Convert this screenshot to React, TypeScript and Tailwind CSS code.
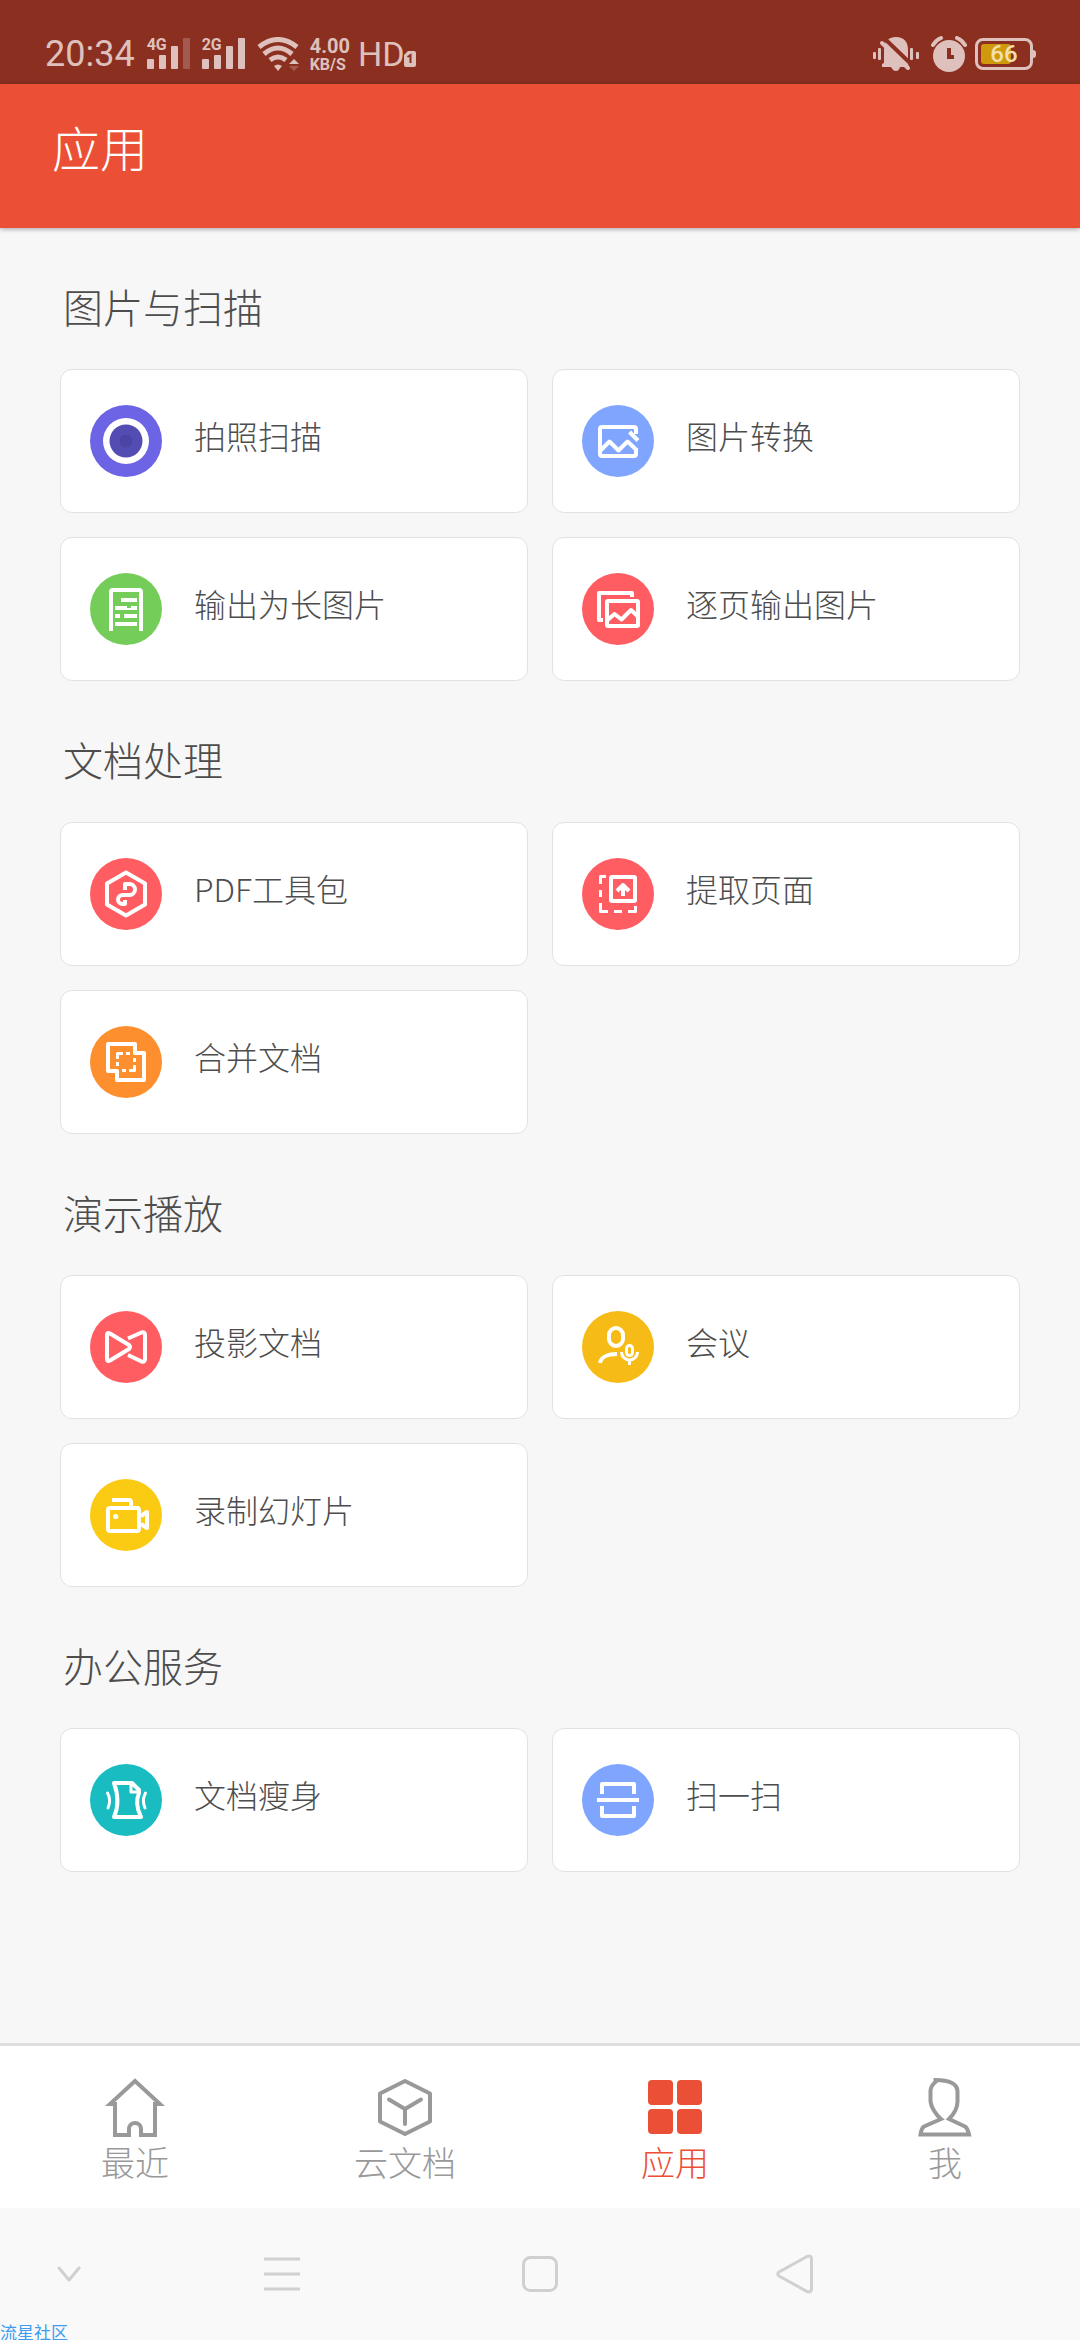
import { useState } from "react";
import type { ReactNode } from "react";

interface Tool {
  name: string;
  color: string;
  icon: ReactNode;
}

interface Section {
  title: string;
  tools: Tool[];
}

const sections: Section[] = [
  {
    title: "图片与扫描",
    tools: [
      {
        name: "拍照扫描",
        color: "bg-[#6c63e5]",
        icon: (
          <g stroke="none">
            <circle cx="36" cy="36" r="23" fill="white" />
            <circle cx="36" cy="36" r="16.5" fill="#534db3" />
            <circle cx="36" cy="36" r="6.3" fill="#4a44a5" />
          </g>
        ),
      },
      {
        name: "图片转换",
        color: "bg-[#7fa5ff]",
        icon: (
          <>
            <path d="M54 29V24Q54 22 52 22H20Q18 22 18 24V49Q18 51 20 51H52Q54 51 54 49V44" />
            <path d="M18 46L27.5 36.5L36.5 45.5L45.5 36.5L55 45.5" />
            <path d="M47.5 27L56 35.5" />
          </>
        ),
      },
      {
        name: "输出为长图片",
        color: "bg-[#74cd58]",
        icon: (
          <>
            <path d="M21 58V19Q21 17 23 17H49Q51 17 51 19V58" />
            <path d="M31 27H47M25 35H37M41 35H47M25 43H30M34 43H47M25 51H47" />
            <path strokeWidth="2" d="M37 36H41" />
          </>
        ),
      },
      {
        name: "逐页输出图片",
        color: "bg-[#ff5d62]",
        icon: (
          <>
            <path d="M50 24V20H17V47H21" />
            <rect x="25" y="28" width="31" height="25" rx="1" />
            <path d="M25 47.5L32.5 41L39.5 46.5L49 37L56 43.5" />
          </>
        ),
      },
    ],
  },
  {
    title: "文档处理",
    tools: [
      {
        name: "PDF工具包",
        color: "bg-[#ff5d62]",
        icon: (
          <>
            <path d="M36 14.5L55 25.5V46.5L36 57.5L17 46.5V25.5Z" />
            <path d="M35 32V26H39.5a5.5 5.5 0 0 1 0 11H32.5a4.5 4.5 0 0 0 0 9H35V42" />
          </>
        ),
      },
      {
        name: "提取页面",
        color: "bg-[#ff5d62]",
        icon: (
          <>
            <rect x="29" y="19" width="24" height="24" rx="1" />
            <path d="M41 38V27M35 33L41 27L47 33" />
            <path
              strokeWidth="3"
              d="M24 18.5H18.5V26M18.5 32V39M18.5 45V53.5H26M32 53.5H40M46 53.5H53.5V48"
            />
          </>
        ),
      },
      {
        name: "合并文档",
        color: "bg-[#fd8f2e]",
        icon: (
          <>
            <path d="M18 18H45V27H54V54H27V45H18Z" />
            <path
              strokeWidth="3"
              d="M27.5 33V27.5H33M36 27.5h4M44.5 32v4M44.5 39V44.5H39M36 44.5h-4M27.5 40v-4"
            />
          </>
        ),
      },
    ],
  },
  {
    title: "演示播放",
    tools: [
      {
        name: "投影文档",
        color: "bg-[#ff5d62]",
        icon: (
          <>
            <path d="M17 24Q17 21 20 22.5L39 34Q41 36 39 38L20 49.5Q17 51 17 48Z" />
            <path d="M38 27.5L51.5 21.5Q55 20.5 55 24V48Q55 51.5 51.5 50.5L38 44" />
          </>
        ),
      },
      {
        name: "会议",
        color: "bg-[#f6bb16]",
        icon: (
          <>
            <rect x="27" y="17" width="14" height="18" rx="7" />
            <path d="M18 52C19 46 26 43 35 43" />
            <rect x="44.5" y="34.5" width="6" height="10" rx="3" strokeWidth="3" />
            <path strokeWidth="3" d="M39.5 41A8 8 0 0 0 55.5 41M47.5 49V54" />
          </>
        ),
      },
      {
        name: "录制幻灯片",
        color: "bg-[#fbcb14]",
        icon: (
          <>
            <rect x="18" y="29" width="31" height="23" rx="2" />
            <path d="M22 21H39Q41 21 41 23V28" />
            <path d="M51 37L57 33V49L51 45" />
            <circle cx="25.7" cy="37.5" r="2.6" fill="white" stroke="none" />
          </>
        ),
      },
    ],
  },
  {
    title: "办公服务",
    tools: [
      {
        name: "文档瘦身",
        color: "bg-[#18bcc1]",
        icon: (
          <>
            <path d="M42 19H24C28 30 29 42 24 53H51C46 43 46 36 49 29V26Z" />
            <path strokeWidth="3" d="M41 20V28H49" />
            <path strokeLinecap="round" strokeWidth="3" d="M17.5 29Q21.5 36 18 44M55.5 29Q51.5 36 55 44" />
          </>
        ),
      },
      {
        name: "扫一扫",
        color: "bg-[#7fa5ff]",
        icon: <path d="M20 30V20H52V30M20 42V52H52V42M15 36H57" />,
      },
    ],
  },
];

const tabs = [
  {
    name: "最近",
    icon: <path d="M30 3L5 26H10V57H24V51a6 6 0 0 1 12 0V57H50V26H55Z" />,
  },
  {
    name: "云文档",
    icon: (
      <g strokeLinecap="round" strokeLinejoin="round">
        <path d="M30 3L55 15.5V43.5L30 56L5 43.5V15.5Z" />
        <path d="M14 21.5L30 31L46 21.5M30 31V46" />
      </g>
    ),
  },
  {
    name: "应用",
    icon: (
      <g fill="currentColor" stroke="none">
        <rect x="3" y="2" width="25" height="25" rx="4" />
        <rect x="32" y="2" width="25" height="25" rx="4" />
        <rect x="3" y="31" width="25" height="25" rx="4" />
        <rect x="32" y="31" width="25" height="25" rx="4" />
      </g>
    ),
  },
  {
    name: "我",
    icon: (
      <path d="M20.5 2C26 2 33 3 37 5C41 7 42.5 10 42.5 14V23.5C42.5 29 39 36 34 41L50 48.5Q52.5 50 54 56.5H5.5Q6.5 50 9 48.5L26 41C21 37 16 29 15.5 23.5V13C15.5 8 18 6 20.5 4Z" />
    ),
  },
];

function Signal({ label, faded }: { label: string; faded?: boolean }) {
  return (
    <div className="relative">
      <svg width="43" height="32" viewBox="0 0 43 32" fill="currentColor">
        <rect x="0" y="21" width="7" height="10" rx="1" />
        <rect x="12" y="17" width="7" height="14" rx="1" />
        <rect x="24" y="8" width="7" height="23" rx="1" />
        <rect x="36" y="0" width="7" height="31" rx="1" opacity={faded ? 0.3 : 1} />
      </svg>
      <span className="absolute top-0 left-0 text-[16px] leading-[13px] font-bold">{label}</span>
    </div>
  );
}

function StatusBar() {
  return (
    <div className="flex h-[84px] items-center justify-between bg-[#8b3020] pt-6 pr-11 pl-[45px] font-['Roboto',sans-serif] text-[#dec1bd]">
      <div className="flex items-center">
        <span className="text-[36px] leading-[36px] font-normal">20:34</span>
        <div className="ml-3 flex gap-3">
          <Signal label="4G" faded />
          <Signal label="2G" />
        </div>
        <svg className="ml-3" width="43" height="34" viewBox="0 0 43 34" fill="none">
          <g stroke="currentColor" strokeWidth="5">
            <path d="M2 10Q21 -5 40 10" />
            <path d="M7 17Q21 5 35 17" />
            <path d="M13 23Q21 17 29 23" />
          </g>
          <path d="M17 29Q21 26 25 29L21 34Z" fill="currentColor" />
          <path d="M32 27L37 22L42 27Z" fill="currentColor" />
          <path d="M32 29L37 34L42 29Z" fill="currentColor" opacity="0.3" />
        </svg>
        <div className="ml-2.5 flex flex-col font-bold">
          <span className="text-[20px] leading-[20px]">4.00</span>
          <span className="text-[16px] leading-[17px]">KB/S</span>
        </div>
        <span className="ml-2 text-[34px] leading-[34px] font-normal">HD</span>
        <svg className="mt-2.5" width="12" height="16" viewBox="0 0 12 16">
          <path d="M4 0H10Q12 0 12 2V14Q12 16 10 16H2Q0 16 0 14V4Z" fill="currentColor" />
          <path d="M3.5 6L6.5 4V12" stroke="#8b3020" strokeWidth="2" fill="none" />
        </svg>
      </div>
      <div className="flex items-center">
        <svg width="46" height="36" viewBox="0 0 46 36" fill="currentColor">
          <rect x="0" y="16" width="3" height="7" rx="1" />
          <rect x="5" y="12" width="3" height="12" rx="1" />
          <rect x="37" y="12" width="3" height="12" rx="1" />
          <rect x="43" y="16" width="3" height="7" rx="1" />
          <path d="M11 14C11 6 15 1 23 1S35 6 35 14V28L36 31H27Q26 35 23 35T18 31H9V28L11 27Z" />
          <path d="M10 1L38 28" stroke="#8b3020" strokeWidth="4" />
          <path d="M9 7L35 32" stroke="currentColor" strokeWidth="4" strokeLinecap="round" />
        </svg>
        <svg className="ml-3" width="36" height="36" viewBox="0 0 36 36" fill="none">
          <circle cx="18" cy="20" r="16" fill="currentColor" />
          <path d="M2 9Q5 4 10 2M34 9Q31 4 26 2" stroke="currentColor" strokeWidth="4" strokeLinecap="round" />
          <path d="M18 12V21H23" stroke="#8b3020" strokeWidth="4" />
        </svg>
        <div className="ml-2 flex items-center">
          <div className="relative flex h-8 w-[58px] items-center justify-center rounded-[8px] border-[3px] border-current">
            <div className="absolute top-[3px] left-[3px] h-5 w-[30px] rounded-[3px] bg-[#d0990c]" />
            <span className="relative text-[24px] leading-[24px] font-medium text-[#f3dfae]">66</span>
          </div>
          <div className="h-2 w-[3px] rounded-r-full bg-current" />
        </div>
      </div>
    </div>
  );
}

function ToolCard({ tool }: { tool: Tool }) {
  return (
    <button className="flex h-36 items-center gap-8 rounded-[12px] border border-[#e2e2e2] bg-white px-[29px] text-left">
      <span className={`size-[72px] shrink-0 rounded-full ${tool.color}`}>
        <svg
          width="72"
          height="72"
          viewBox="0 0 72 72"
          fill="none"
          stroke="white"
          strokeWidth="4"
          strokeLinejoin="round"
        >
          {tool.icon}
        </svg>
      </span>
      <span className="pb-3 text-[32px] leading-[48px]">{tool.name}</span>
    </button>
  );
}

function SystemNav() {
  return (
    <div className="relative grid h-[132px] grid-cols-[138fr_288fr_228fr_282fr_144fr] bg-[#f9f9f9] text-[#d0d0d0]">
      <button aria-label="收起" className="flex items-center justify-center">
        <svg width="24" height="16" viewBox="0 0 24 16" fill="none" stroke="currentColor" strokeWidth="3">
          <path d="M2 2L12 14L22 2" strokeLinecap="round" strokeLinejoin="round" />
        </svg>
      </button>
      <button aria-label="菜单" className="flex items-center justify-center">
        <svg width="36" height="34" viewBox="0 0 36 34" stroke="currentColor" strokeWidth="3">
          <path d="M0 2H36M0 17H36M0 32H36" />
        </svg>
      </button>
      <button aria-label="主页" className="flex items-center justify-center">
        <svg width="36" height="36" viewBox="0 0 36 36" fill="none" stroke="currentColor" strokeWidth="3">
          <rect x="1.5" y="1.5" width="33" height="33" rx="7" />
        </svg>
      </button>
      <button aria-label="返回" className="flex items-center justify-center">
        <svg width="38" height="40" viewBox="0 0 38 40" fill="none" stroke="currentColor" strokeWidth="3">
          <path d="M31 2.5Q35.5 1 35.5 5V35Q35.5 39 31 37.5L3 22Q0.5 20 3 18Z" strokeLinejoin="round" />
        </svg>
      </button>
      <span className="absolute bottom-0 left-0 text-[17px] leading-[17px] font-normal text-[#3d9bf0]">
        流星社区
      </span>
    </div>
  );
}

function App() {
  const [activeTab, setActiveTab] = useState("应用");

  return (
    <div className="flex min-h-screen flex-col bg-[#f7f7f7] font-['Noto_Sans_CJK_SC',sans-serif] font-light text-[#4d4d4d]">
      <StatusBar />
      <header className="relative flex h-36 items-center bg-[#eb5036] px-[52px] pb-5 shadow-[0_1px_5px_rgba(0,0,0,0.35)]">
        <h1 className="text-[48px] leading-[60px] text-white">应用</h1>
      </header>

      <main className="flex-1 px-[60px]">
        {sections.map((section) => (
          <section key={section.title} className="pt-12">
            <h2 className="mb-[33px] pl-[3px] text-[40px] leading-[60px]">{section.title}</h2>
            <div className="grid grid-cols-2 gap-6">
              {section.tools.map((tool) => (
                <ToolCard key={tool.name} tool={tool} />
              ))}
            </div>
          </section>
        ))}
      </main>

      <nav className="grid grid-cols-4 border-t-[3px] border-[#dedede] bg-white">
        {tabs.map((tab) => (
          <button
            key={tab.name}
            onClick={() => setActiveTab(tab.name)}
            className={`flex flex-col items-center pt-8 pb-[22px] ${
              activeTab === tab.name ? "text-[#eb5036]" : "text-[#999999]"
            }`}
          >
            <svg width="60" height="60" viewBox="0 0 60 60" fill="none" stroke="currentColor" strokeWidth="4">
              {tab.icon}
            </svg>
            <span className="text-[34px] leading-[48px]">{tab.name}</span>
          </button>
        ))}
      </nav>
      <SystemNav />
    </div>
  );
}

export default App;
